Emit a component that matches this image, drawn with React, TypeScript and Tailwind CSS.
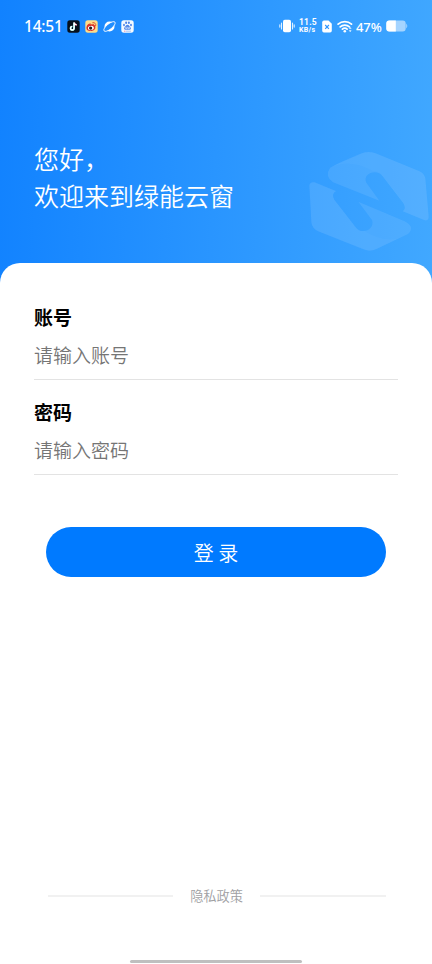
import { useState } from "react";

type FieldProps = {
  label: string;
  placeholder: string;
  type: string;
  value: string;
  onChange: (value: string) => void;
};

function VideoAppIcon() {
  return (
    <svg width="13" height="13" viewBox="0 0 13 13" fill="none">
      <rect x="0.3" y="0.3" width="12.4" height="12.4" rx="2.6" fill="#07101c" />
      <path d="M7 2.6V8.2A1.7 1.7 0 1 1 5.3 6.5" stroke="#6ff3f0" strokeWidth="1.7" />
      <path d="M7.3 2.6C7.5 4 8.5 4.9 9.8 5" stroke="#ff5378" strokeWidth="1.5" />
      <path d="M7.1 2.6V8.2A1.8 1.8 0 1 1 5.3 6.4M7.1 2.6C7.3 3.8 8.2 4.7 9.6 4.8" stroke="#fff" strokeWidth="1.4" />
    </svg>
  );
}

function WeiboIcon() {
  return (
    <svg width="13" height="13" viewBox="0 0 13 13" fill="none">
      <rect x="0.3" y="0.3" width="12.4" height="12.4" rx="2.6" fill="#ffdc88" />
      <ellipse cx="5.9" cy="7.7" rx="4.5" ry="3.3" fill="#d93028" transform="rotate(-8 5.9 7.7)" />
      <ellipse cx="5.9" cy="8" rx="3" ry="2.1" fill="#fff" transform="rotate(-8 5.9 8)" />
      <circle cx="5.6" cy="8.1" r="1.6" fill="#251a1a" />
      <path d="M2.1 6.4C3 4.6 4.7 3.8 5.8 4.2" stroke="#d93028" strokeWidth="1.2" />
      <path d="M7.8 2.6C9.9 2.2 11.3 4 10.7 5.8M8 4.4C9 4.3 9.4 5 9.2 5.7" stroke="#d9452c" strokeWidth="0.9" strokeLinecap="round" />
    </svg>
  );
}

function PlanetIcon() {
  return (
    <svg width="13" height="13" viewBox="0 0 13 13">
      <circle cx="6.5" cy="6.5" r="5" fill="#fff" />
      <ellipse cx="6.5" cy="6.5" rx="7" ry="2.7" fill="#218eff" stroke="#fff" strokeWidth="0.8" transform="rotate(-39 6.5 6.5)" />
    </svg>
  );
}

function PawIcon() {
  return (
    <svg width="13" height="13" viewBox="0 0 13 13">
      <rect x="0.3" y="0.3" width="12.4" height="12.4" rx="2.6" fill="#f5faff" />
      <g fill="#4d84e8">
        <ellipse cx="5.1" cy="2.8" rx="1" ry="1.3" />
        <ellipse cx="7.9" cy="2.8" rx="1" ry="1.3" />
        <ellipse cx="3" cy="5" rx="0.9" ry="1.2" />
        <ellipse cx="10" cy="5" rx="0.9" ry="1.2" />
        <path d="M6.5 4.7C7.9 4.7 8.2 6.1 9.2 7.1C10.7 8.7 9.6 10.2 8 9.8C7 9.6 6 9.6 5 9.8C3.4 10.2 2.3 8.7 3.8 7.1C4.8 6.1 5.1 4.7 6.5 4.7Z" />
      </g>
      <path d="M4.7 7.1V8.7H6V6.7M7.1 6.9V8.7H8.4V6.9" stroke="#f5faff" strokeWidth="0.6" fill="none" />
      <path d="M3 11.2H4.5" stroke="#e0709c" strokeWidth="0.8" />
      <path d="M5 11.2H10" stroke="#8fb5f2" strokeWidth="0.8" />
    </svg>
  );
}

function VibrateIcon() {
  return (
    <svg width="16" height="14" viewBox="0 0 16 14" fill="#fff">
      <rect x="4" y="0.8" width="8" height="12.4" rx="1.8" />
      <path d="M2.5 4V10M13.5 4V10M.8 5.9V8.1M15.2 5.9V8.1" stroke="#fff" strokeOpacity="0.85" strokeWidth="1.1" strokeLinecap="round" />
    </svg>
  );
}

function SimIcon() {
  return (
    <svg width="10" height="13" viewBox="0 0 10 13">
      <path d="M2 .5H6.5L9.8 3.8V10.8Q9.8 12.5 8.1 12.5H1.9Q.2 12.5.2 10.8V2.2Q.2.5 2 .5Z" fill="#fff" />
      <path d="M3.2 5L6.9 8.8M6.9 5L3.2 8.8" stroke="#3197ff" strokeWidth="1.2" />
    </svg>
  );
}

function WifiIcon() {
  return (
    <svg width="16" height="13" viewBox="0 0 16 13" fill="none">
      <path d="M1.1 4.2C4.9.7 10.7.7 14.5 4.2M3.2 6.8C5.7 4.5 9.9 4.5 12.4 6.8M5.4 9.2C6.8 7.9 8.8 7.9 10.1 9.2" stroke="#fff" strokeWidth="1.7" strokeLinecap="round" />
      <circle cx="7.8" cy="11.2" r="1.3" fill="#fff" />
      <path d="M12.2 8.6L13.2 7.4L14.2 8.6ZM12.2 10.6L13.2 11.8L14.2 10.6Z" fill="#fff" stroke="#fff" strokeWidth="0.4" />
    </svg>
  );
}

function BatteryIcon() {
  return (
    <svg width="22" height="12" viewBox="0 0 22 12">
      <rect x="0.3" y="0.5" width="19.4" height="11" rx="3" fill="#a5d4ff" />
      <path d="M3.3.5H9.8V11.5H3.3Q.3 11.5.3 8.5V3.5Q.3.5 3.3.5Z" fill="#fff" />
      <path d="M20.2 3.6Q22.4 6 20.2 8.4Z" fill="#a5d4ff" />
    </svg>
  );
}

function StatusBar() {
  return (
    <div className="flex h-[52px] items-center justify-between px-6 font-['Noto_Sans',sans-serif] text-white">
      <div className="flex items-center gap-[5px]">
        <span className="-mt-px w-[38px] whitespace-nowrap text-[15.5px] font-medium leading-5 tracking-[-0.2px]">14:51</span>
        <VideoAppIcon />
        <WeiboIcon />
        <PlanetIcon />
        <PawIcon />
      </div>
      <div className="flex items-center">
        <VibrateIcon />
        <div className="ml-1 flex w-[19px] flex-col whitespace-nowrap font-['Roboto',sans-serif] font-bold">
          <span className="text-[8.5px] leading-[8px] tracking-[0.2px]">11.5</span>
          <span className="text-[7px] leading-[8px] tracking-[0.3px]">KB/s</span>
        </div>
        <div className="ml-1 flex items-center gap-[5px]">
          <SimIcon />
          <WifiIcon />
        </div>
        <span className="ml-[3px] mr-1 mt-px w-[26px] whitespace-nowrap text-[13px] font-medium leading-5 tracking-[-0.1px]">47%</span>
        <BatteryIcon />
      </div>
    </div>
  );
}

function Emblem() {
  return (
    <svg width="137" height="125" viewBox="0 0 411 375" className="absolute right-0 top-[140px]">
      <g fill="#fff" fillOpacity="0.085">
        <path d="M105 84Q112 77 200 40Q220 32 242 40L372 93Q387 99 391 115L401 228Q402 245 387 240L323 214Q335 204 324 188L264 110C246 83 201 101 214 128L253 182L114 127Q88 108 105 84Z" />
        <path d="M43 137Q44 124 59 127L123 153Q108 162 118 179L181 260C201 288 241 267 231 240L190 185L327 243Q362 260 339 282L246 326Q225 337 205 328L69 274Q51 265 49 247Z" />
      </g>
      <g fill="#fff" fillOpacity="0.025">
        <path d="M105 84Q112 77 200 40Q220 32 242 40L372 93Q387 99 391 115L401 228Q402 245 387 240L323 214Q335 204 324 188L264 110Q252 93 234 94C204 76 150 59 105 84Z" />
        <path d="M43 137Q44 124 59 127L123 153Q108 162 118 179L181 260Q192 276 208 272C241 294 289 308 325 288L246 326Q225 337 205 328L69 274Q51 265 49 247Z" />
      </g>
    </svg>
  );
}

function Field({ label, placeholder, type, value, onChange }: FieldProps) {
  return (
    <label className="block h-[95px]">
      <span className="block h-7 text-[19px] font-bold leading-7 text-black">{label}</span>
      <input
        type={type}
        value={value}
        placeholder={placeholder}
        onChange={(e) => onChange(e.target.value)}
        className="block h-[49px] w-full border-b border-[#e3e3e3] bg-transparent pb-0.5 text-[19px] font-[350] text-black outline-none placeholder:text-[#757575]"
      />
    </label>
  );
}

export default function App() {
  const [account, setAccount] = useState("");
  const [password, setPassword] = useState("");

  return (
    <div className="relative flex h-[964px] w-[432px] flex-col overflow-hidden bg-white font-['Noto_Sans_CJK_SC',sans-serif]">
      {/* Header */}
      <header className="h-[290px] shrink-0 bg-linear-[93deg] from-[#1182ff] to-[#41a8ff]">
        <StatusBar />
        <Emblem />
        <h1 className="mt-[88px] pl-[34px] text-[25px] font-[350] leading-[37px] text-white">
          您好，
          <br />
          欢迎来到绿能云窗
        </h1>
      </header>

      {/* Login form */}
      <main className="relative -mt-[27px] flex flex-1 flex-col rounded-t-[20px] bg-white">
        <form className="px-[34px] pt-10" onSubmit={(e) => e.preventDefault()}>
          <Field label="账号" placeholder="请输入账号" type="text" value={account} onChange={setAccount} />
          <Field label="密码" placeholder="请输入密码" type="password" value={password} onChange={setPassword} />
          <div className="px-3 pt-[34px]">
            <button type="submit" className="h-[50px] w-full rounded-full bg-[#007aff] pt-0.5 text-[20px] font-[350] leading-[48px] text-white">
              登 录
            </button>
          </div>
        </form>

        <footer className="mt-auto">
          <div className="mb-[54px] flex items-center justify-between pl-12 pr-[46px]">
            <span className="h-[2px] w-[125px] bg-[#f1f1f1]" />
            <a className="text-[13.2px] font-[350] leading-5 text-[#a0a0a3]">隐私政策</a>
            <span className="h-[2px] w-[126px] bg-[#f1f1f1]" />
          </div>
          <div className="mx-auto mb-[1px] h-[3px] w-[172px] rounded-full bg-[#bfbfbf]" />
        </footer>
      </main>
    </div>
  );
}
